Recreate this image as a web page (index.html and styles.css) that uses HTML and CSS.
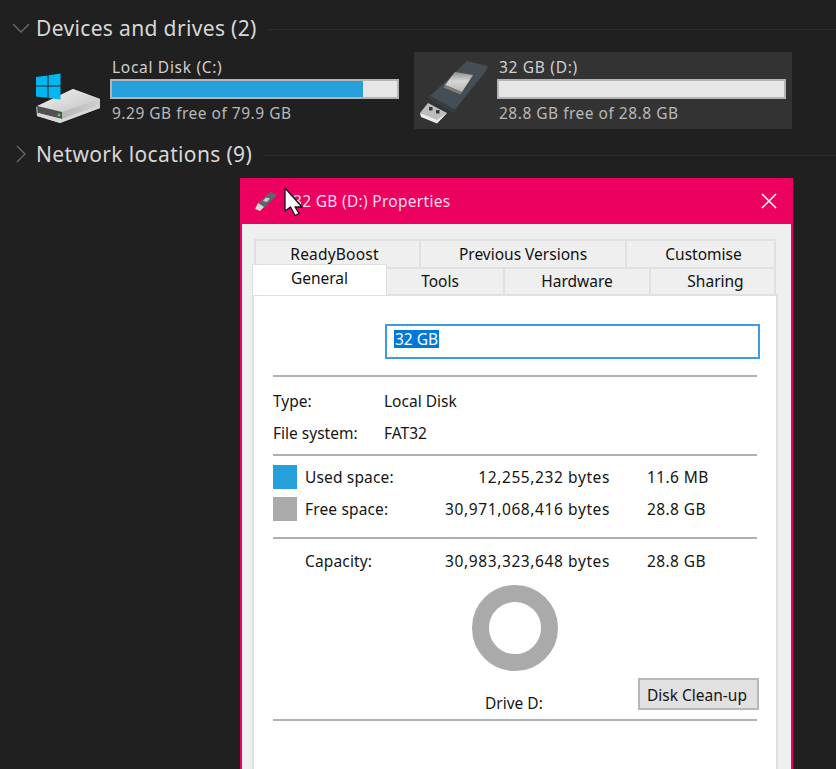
FILE: index.html
```html
<!DOCTYPE html>
<html lang="en">
<head>
<meta charset="utf-8">
<title>32 GB (D:) Properties</title>
<link rel="stylesheet" href="styles.css">
</head>
<body>
<main class="explorer">
  <section class="group">
    <header class="group-head">
      <svg class="chevron" width="18" height="10" viewBox="0 0 18 10"><path d="M1 1l8 8 8-8" fill="none" stroke="#6a6a6a" stroke-width="1.3"/></svg>
      <h2 class="group-title">Devices and drives (2)</h2>
      <span class="group-line"></span>
    </header>
    <div class="drives">
      <div class="drive drive-c">
        <svg class="drive-icon hdd" width="68" height="56" viewBox="0 0 68 56">
          <defs>
            <linearGradient id="hddTop" x1="0" y1="0" x2="1" y2="1"><stop offset="0" stop-color="#f0f0f0"/><stop offset="1" stop-color="#c4c4c4"/></linearGradient>
            <linearGradient id="hddSide" x1="0" y1="0" x2="1" y2="0"><stop offset="0" stop-color="#a8a8a8"/><stop offset="1" stop-color="#cfcfcf"/></linearGradient>
          </defs>
          <path d="M3 37 40 19 67 29V38L27 53 4 46Z" fill="url(#hddSide)"/>
          <path d="M4 36 40 19 67 29 29 42Z" fill="url(#hddTop)"/>
          <path d="M4 36 29 42V49L5 43Z" fill="#505050"/>
          <path d="M5 43 29 49 67 35V38L27 53 4 46Z" fill="#d8d8d8"/>
          <circle cx="26" cy="45" r="1.500" fill="#3ddc4c"/>
          <path d="M3 7 14.500 5.400V15.500H3ZM15.500 5.200 27.500 3.600V15.500H15.500ZM3 16.500H14.500V27.700L3 26.500ZM15.500 16.500H27.500V29.500L15.500 28Z" fill="#00b7f1"/>
        </svg>
        <div class="drive-info">
          <div class="drive-name">Local Disk (C:)</div>
          <div class="bar"><div class="bar-fill" style="width:88%"></div></div>
          <div class="drive-free">9.29 GB free of 79.9 GB</div>
        </div>
      </div>
      <div class="drive drive-d">
        <svg class="drive-icon usb-large" width="70" height="66" viewBox="0 0 70 66">
          <defs>
            <linearGradient id="usbWin" x1="0" y1="0" x2="0" y2="1"><stop offset="0" stop-color="#8f9292"/><stop offset="0.450" stop-color="#d6d6d2"/><stop offset="1" stop-color="#b8b8b4"/></linearGradient>
          </defs>
          <path d="M47 1 68 6 66 11 33 52 8 38Z" fill="#454e55"/>
          <path d="M8 38 33 52 35 49.500 10 35.500Z" fill="#363d42"/>
          <path d="M35 12 53 15 42 32 25 25Z" fill="url(#usbWin)"/>
          <path d="M25 25 42 32 40.500 34.500 23.500 27.500Z" fill="#7f7f7b"/>
          <path d="M0 53 8 43 27 53 17 63Z" fill="#bdbdbb"/>
          <path d="M0 53 17 60 27 53 17 63.500 1 57Z" fill="#ececec"/>
          <rect x="9" y="47" width="3.500" height="3.500" fill="#34393c"/>
          <rect x="16" y="50" width="3.500" height="3.500" fill="#34393c"/>
        </svg>
        <div class="drive-info">
          <div class="drive-name">32 GB (D:)</div>
          <div class="bar"><div class="bar-fill" style="width:0%"></div></div>
          <div class="drive-free">28.8 GB free of 28.8 GB</div>
        </div>
      </div>
    </div>
  </section>
  <section class="group group-net">
    <header class="group-head">
      <svg class="chevron chevron-right" width="10" height="18" viewBox="0 0 10 18"><path d="M1 1l8 8-8 8" fill="none" stroke="#6a6a6a" stroke-width="1.3"/></svg>
      <h2 class="group-title">Network locations (9)</h2>
      <span class="group-line"></span>
    </header>
  </section>
</main>

<div class="dialog">
  <div class="titlebar">
    <svg class="title-icon" width="24" height="22" viewBox="0 0 24 22">
      <path d="M4 13 17 2 23 5 10 18Z" fill="#5d666c"/>
      <path d="M12 7.500 16 8.500 13 12 9 11Z" fill="#c9c9c9"/>
      <path d="M4 13 10 17 6 21 1 19Z" fill="#d8d8d8"/>
    </svg>
    <span class="title-text">32 GB (D:) Properties</span>
    <svg class="close" width="16" height="16" viewBox="0 0 16 16"><path d="M1 1l14 14M15 1L1 15" stroke="#fff" stroke-width="1.500" fill="none"/></svg>
  </div>
  <div class="dialog-body">
    <div class="tabs">
      <div class="tab-row tab-row-back">
        <div class="tab tab-readyboost">ReadyBoost</div>
        <div class="tab tab-previous">Previous Versions</div>
        <div class="tab tab-customise">Customise</div>
      </div>
      <div class="tab-row tab-row-front">
        <div class="tab tab-general">General</div>
        <div class="tab tab-tools">Tools</div>
        <div class="tab tab-hardware">Hardware</div>
        <div class="tab tab-sharing">Sharing</div>
      </div>
    </div>
    <div class="panel">
      <div class="name-row">
        <div class="name-input"><span class="selected">32 GB</span></div>
      </div>
      <hr class="rule rule-a">
      <div class="info-row info-type"><span class="info-label">Type:</span><span>Local Disk</span></div>
      <div class="info-row info-fs"><span class="info-label">File system:</span><span>FAT32</span></div>
      <hr class="rule rule-b">
      <div class="space-row space-used">
        <span class="swatch swatch-used"></span><span class="space-label">Used space:</span><span class="space-bytes">12,255,232 bytes</span><span class="space-size">11.6 MB</span>
      </div>
      <div class="space-row space-free">
        <span class="swatch swatch-free"></span><span class="space-label">Free space:</span><span class="space-bytes">30,971,068,416 bytes</span><span class="space-size">28.8 GB</span>
      </div>
      <hr class="rule rule-c">
      <div class="space-row space-cap">
        <span class="swatch swatch-none"></span><span class="space-label">Capacity:</span><span class="space-bytes">30,983,323,648 bytes</span><span class="space-size">28.8 GB</span>
      </div>
      <div class="donut-area">
        <svg class="donut" width="88" height="88" viewBox="0 0 88 88"><circle cx="44" cy="44" r="34.500" fill="none" stroke="#aaaaaa" stroke-width="17"/></svg>
        <div class="drive-caption">Drive D:</div>
        <button class="cleanup" type="button">Disk Clean-up</button>
      </div>
      <hr class="rule rule-d">
    </div>
  </div>
</div>

<svg class="cursor" width="22" height="32" viewBox="0 0 22 32"><path d="M2 1V24L7.500 20 12 28.500 16 26.500 12 20H19Z" fill="#fff" stroke="#111" stroke-width="1.300" stroke-linejoin="round"/></svg>
</body>
</html>
```
FILE: styles.css
```css
* { box-sizing: border-box; }
html, body { margin: 0; height: 100%; }
body {
  background: #202020;
  overflow: hidden;
  position: relative;
  font-family: "Noto Sans", "Open Sans", sans-serif;
  color: #000;
}
.explorer { padding-top: 14px; }
.group-head { display: flex; align-items: center; height: 28px; }
.chevron { margin-left: 12px; flex: none; }
.chevron-right { margin-left: 16px; margin-right: 10px; }
.group-title {
  margin: 0 11px 0 6px;
  font-size: 21px;
  font-weight: 400;
  letter-spacing: 0.350px;
  color: #d8d8d8;
  white-space: nowrap;
  line-height: 26px;
}
.chevron-right + .group-title { margin-left: 0; margin-right: 11px; }
.group-line { flex: 1; height: 1px; background: #2d2d2d; margin-top: 2px; }
.drives { display: flex; margin-top: 10px; padding-left: 33px; }
.drive { display: flex; align-items: center; height: 77px; }
.drive-c { width: 381px; }
.drive-d { width: 378px; background: #333333; }
.drive-icon { flex: none; }
.hdd { margin-top: 15px; }
.usb-large { margin: 5px 0 0 6px; }
.drive-info { margin-left: 9px; width: 289px; margin-top: -2px; }
.drive-d .drive-info { margin-left: 7px; }
.drive-name, .drive-free {
  font-size: 15.500px;
  line-height: 22px;
  color: #cfcfcf;
  padding-left: 2px;
  white-space: nowrap;
}
.drive-name { letter-spacing: 0.700px; margin-bottom: 1px; }
.drive-free { color: #b8b8b8; letter-spacing: 0.500px; }
.bar { height: 20px; background: #e6e6e6; border: 2px solid #b4b4b4; margin: 1px 0 3px; }
.bar-fill { height: 100%; background: #26a0da; }
.group-net { margin-top: 11px; }

.dialog {
  position: absolute;
  left: 240px;
  top: 178px;
  width: 553px;
  height: 620px;
  background: #ec0060;
  border-left: 2px solid #ec0060;
  border-right: 2px solid #ec0060;
  display: flex;
  flex-direction: column;
  box-shadow: 0 0 0 1px #2a1a20;
}
.titlebar { height: 46px; display: flex; align-items: center; flex: none; padding-left: 12px; color: #fbdbe8; }
.title-icon { flex: none; }
.title-text { font-size: 15.500px; letter-spacing: 0.300px; margin-left: 15px; flex: 1; white-space: nowrap; }
.close { margin-right: 14px; flex: none; }
.dialog-body { flex: 1; background: #efefef; padding: 15px 13px 0 10px; }
.tabs { display: flex; flex-direction: column; font-size: 15.500px; }
.tab { display: flex; align-items: center; justify-content: center; color: #111; background: #efefef; border: 2px solid #e0e0e0; border-bottom: 0; white-space: nowrap; }
.tab-row { display: flex; }
.tab-row-back { height: 28px; padding-left: 2px; padding-right: 2px; }
.tab-row-front { height: 27px; padding-right: 2px; position: relative; }
.tab + .tab { border-left: 0; }
.tab-readyboost { width: 167px; padding-right: 6px; letter-spacing: 0.200px; }
.tab-previous { width: 206px; }
.tab-customise { width: 149px; padding-left: 6px; }
.tab-general { width: 135px; height: 31px; margin-top: -3px; background: #fff; color: #111; border-width: 1px; padding-bottom: 5px; position: relative; z-index: 1; margin-bottom: -2px; }
.tab-tools { width: 118px; padding-right: 10px; padding-bottom: 2px; }
.tab-hardware { width: 146px; padding-bottom: 2px; }
.tab-sharing { width: 125px; padding-left: 6px; padding-bottom: 2px; }
.panel { background: #fff; border: 2px solid #e0e0e0; margin-top: 0; height: 500px; padding: 28px 19px 0 19px; width: 526px; }
.name-row { display: flex; justify-content: flex-end; }
.name-input { width: 375px; height: 35px; border: 2px solid #3d9be6; padding: 3px 7px; font-size: 15.500px; line-height: 21px; margin-right: -3px; }
.selected { display: inline-block; background: #0078d7; color: #fff; padding: 0 1px; height: 18px; line-height: 18px; }
.rule { border: 0; height: 2px; background: #b0b0b0; margin: 0; width: 484px; }
.rule-a { margin-top: 16px; }
.info-row { display: flex; align-items: center; height: 32px; font-size: 15.500px; color: #151515; }
.info-type { margin-top: 8px; }
.info-label { width: 111px; }
.rule-b { margin-top: 5px; }
.space-row { display: flex; align-items: center; height: 32px; font-size: 15.500px; color: #151515; }
.space-used { margin-top: 5px; }
.swatch { width: 24px; height: 24px; flex: none; margin-right: 8px; }
.swatch-used { background: #26a0da; }
.swatch-free { background: #aaaaaa; }
.swatch-none { background: transparent; }
.space-label { width: 110px; letter-spacing: 0.150px; }
.space-bytes { width: 195px; text-align: right; margin-left: 0; white-space: nowrap; letter-spacing: 0.600px; }
.space-size { margin-left: 37px; white-space: nowrap; letter-spacing: 0.400px; }
.rule-c { margin-top: 12px; }
.space-cap { margin-top: 6px; }
.donut-area { position: relative; height: 142px; }
.donut { position: absolute; left: 198px; top: 7px; }
.drive-caption { position: absolute; left: 212px; top: 115px; font-size: 15.500px; color: #151515; }
.cleanup { position: absolute; left: 365px; top: 101px; width: 121px; height: 32px; background: #e1e1e1; border: 2px solid #b8b8b8; font: inherit; font-size: 15.500px; color: #151515; padding: 1px 3px 0 0; }
.rule-d { margin-top: 0; }
.cursor { position: absolute; left: 283px; top: 187px; }
```
